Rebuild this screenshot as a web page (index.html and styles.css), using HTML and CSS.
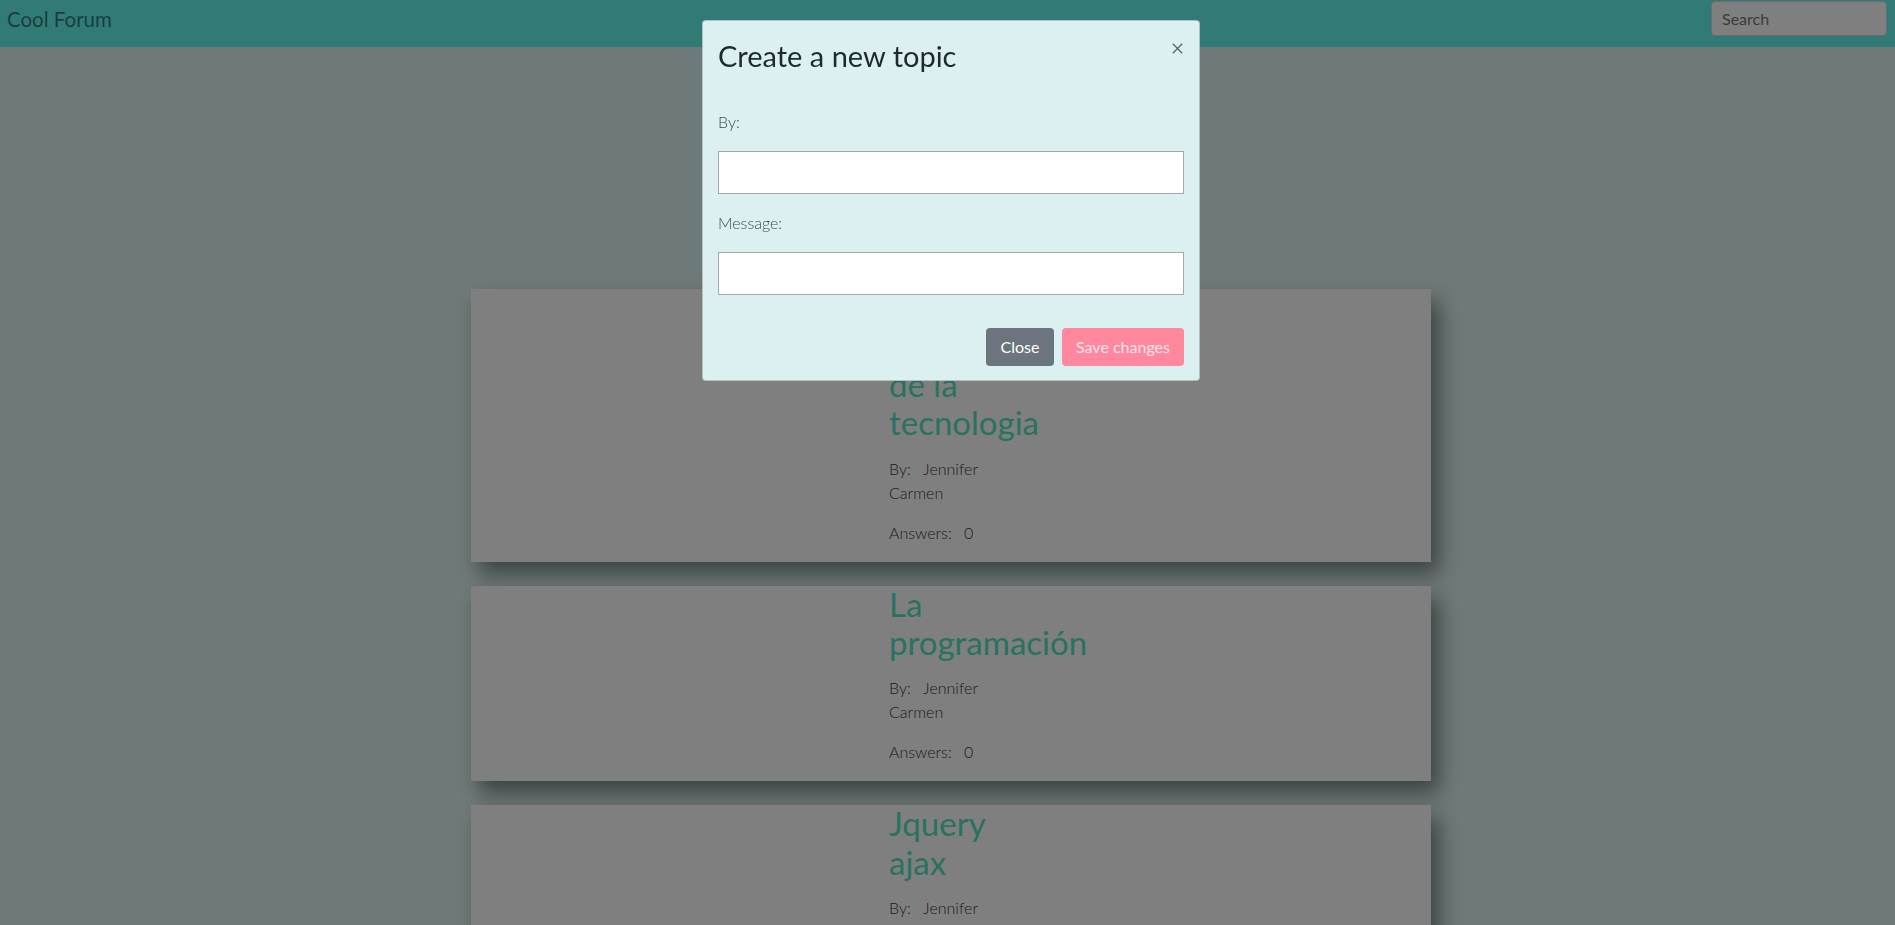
FILE: index.html
```html
<!DOCTYPE html>
<html lang="es">
<head>
<meta charset="utf-8">
<title>Cool Forum</title>
<link rel="stylesheet" href="styles.css">
</head>
<body class="modal-open">
  <nav class="navbar">
    <a class="brand" href="#">Cool Forum</a>
    <input class="search" type="text" placeholder="Search">
  </nav>

  <main class="topics">
    <article class="topic">
      <div class="topic-media"></div>
      <div class="topic-body">
        <h2 class="topic-title">Los avances de la tecnologia</h2>
        <p class="topic-meta"><span class="key">By:</span> <span class="val">Jennifer</span> <span class="val2">Carmen</span></p>
        <p class="topic-meta"><span class="key">Answers:</span> <span class="val">0</span></p>
      </div>
    </article>
    <article class="topic">
      <div class="topic-media"></div>
      <div class="topic-body">
        <h2 class="topic-title">La programación</h2>
        <p class="topic-meta"><span class="key">By:</span> <span class="val">Jennifer</span> <span class="val2">Carmen</span></p>
        <p class="topic-meta"><span class="key">Answers:</span> <span class="val">0</span></p>
      </div>
    </article>
    <article class="topic">
      <div class="topic-media"></div>
      <div class="topic-body">
        <h2 class="topic-title">Jquery ajax</h2>
        <p class="topic-meta"><span class="key">By:</span> <span class="val">Jennifer</span> <span class="val2">Carmen</span></p>
        <p class="topic-meta"><span class="key">Answers:</span> <span class="val">0</span></p>
      </div>
    </article>
  </main>

  <div class="backdrop"></div>

  <div class="modal">
    <div class="modal-dialog">
      <div class="modal-header">
        <h2 class="modal-title">Create a new topic</h2>
        <button class="close" type="button" aria-label="Close">
          <svg width="11" height="11" viewBox="0 0 11 11"><path d="M0.8 0.8 L10.2 10.2 M10.2 0.8 L0.8 10.2" stroke="#5b6668" stroke-width="1.3" fill="none"/></svg>
        </button>
      </div>
      <div class="modal-body">
        <label class="field-label">By:</label>
        <input class="field" type="text">
        <label class="field-label second">Message:</label>
        <input class="field" type="text">
      </div>
      <div class="modal-footer">
        <button class="btn btn-close" type="button">Close</button>
        <button class="btn btn-save" type="button">Save changes</button>
      </div>
    </div>
  </div>
</body>
</html>
```

FILE: styles.css
```css
* { box-sizing: border-box; }

html, body {
  margin: 0;
  padding: 0;
}

body {
  background: #ddf4f2;
  font-family: "Lato", "Noto Sans", sans-serif;
  font-size: 16px;
  line-height: 1.5;
  color: #333;
  overflow: hidden;
  height: 925px;
}

/* navbar */
.navbar {
  display: flex;
  justify-content: space-between;
  align-items: flex-start;
  height: 47px;
  padding: 1px 9px 0 7px;
  background: #62f4ec;
}

.brand {
  font-size: 20.5px;
  line-height: 30px;
  color: rgba(0, 0, 0, 0.5);
  text-decoration: none;
  margin-top: 3px;
}

.search {
  width: 176px;
  height: 35px;
  margin-right: -1px;
  border: 1px solid #d4dadd;
  border-radius: 4px;
  background: #fff;
  padding: 4px 10px;
  font-family: "Lato", sans-serif;
  font-size: 16px;
}
.search::placeholder { color: #777; }

/* topics */
.topics {
  display: flex;
  flex-direction: column;
  align-items: center;
  padding: 242px 0 0 7px;
  gap: 24px;
}

.topic {
  width: 960px;
  background: #fff;
  padding-bottom: 1px;
  display: grid;
  grid-template-columns: 418px 130px;
  box-shadow: 8px 12px 20px rgba(0, 0, 0, 0.45);
}

.topic-title {
  margin: -1px 0 15px;
  font-size: 33px;
  line-height: 38.4px;
  font-weight: 400;
  color: #52e4c4;
}

.topic-meta {
  margin: 0 0 16px;
  font-weight: 300;
  line-height: 24px;
  color: #383838;
}

.topic-meta .val { margin-left: 8px; }

/* modal */
.backdrop {
  position: fixed;
  inset: 0;
  background: rgba(0, 0, 0, 0.5);
  z-index: 10;
}

.modal {
  position: fixed;
  inset: 0;
  z-index: 20;
  padding-left: 7px;
}

.modal-dialog {
  width: 498px;
  margin: 20px auto 0;
  background: #dcf0f2;
  border: 1px solid rgba(0, 0, 0, 0.2);
  border-radius: 4px;
}

.modal-header {
  display: flex;
  justify-content: space-between;
  align-items: flex-start;
  padding: 16px 15px;
}

.modal-title {
  margin: 0;
  font-size: 29px;
  line-height: 38.4px;
  font-weight: 400;
  color: #1f2a2d;
}

.close {
  border: 0;
  background: none;
  padding: 0;
  margin: 6px 1px 0 0;
  width: 11px;
  height: 11px;
  display: block;
}
.close svg { display: block; }

.modal-body {
  padding: 19px 15px 0;
  display: flex;
  flex-direction: column;
}

.field-label {
  display: block;
  line-height: 24px;
  font-weight: 300;
  color: #3d4a4c;
  margin-bottom: 17px;
}
.field-label.second { margin-top: 17px; }

.field {
  height: 43px;
  width: 100%;
  border: 1px solid #a3a8aa;
  background: #fff;
}

.modal-footer {
  display: flex;
  justify-content: flex-end;
  gap: 8px;
  padding: 33px 15px 14px;
}

.btn {
  height: 38px;
  border: 0;
  border-radius: 4px;
  padding: 0 6px;
  font-family: "Lato", sans-serif;
  font-size: 16px;
  font-weight: 400;
  line-height: 38px;
}

.btn-close {
  width: 68px;
  background: #6c757d;
  color: #fff;
}

.btn-save {
  width: 122px;
  background: #ff889f;
  color: #ffe4ea;
}
```
